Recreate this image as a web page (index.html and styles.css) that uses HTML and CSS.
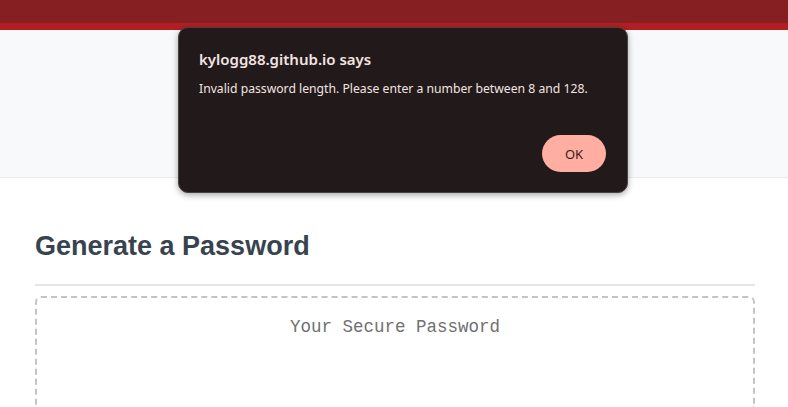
FILE: index.html
```html
<!DOCTYPE html>
<html lang="en">
<head>
<meta charset="utf-8">
<title>Password Generator</title>
<link rel="stylesheet" href="styles.css">
</head>
<body>
<header class="topbar"></header>
<section class="hero"></section>
<main class="wrapper">
  <div class="card">
    <h2 class="card-title">Generate a Password</h2>
    <div class="card-body">
      <textarea class="password" readonly placeholder="Your Secure Password"></textarea>
    </div>
  </div>
</main>
<div class="dialog" role="dialog">
  <div class="dialog-title">kylogg88.github.io says</div>
  <div class="dialog-msg">Invalid password length. Please enter a number between 8 and 128.</div>
  <div class="dialog-actions"><button class="ok-btn">OK</button></div>
</div>
</body>
</html>
```
FILE: styles.css
```css
* { box-sizing: border-box; }
html, body { margin: 0; padding: 0; }
html { overflow: hidden; }
body {
  background: #ffffff;
  font-family: "Liberation Sans", Arial, sans-serif;
  overflow: hidden;
  height: 407px;
}
.topbar {
  height: 30px;
  background: #861f21;
  border-bottom: 7px solid #b21f23;
}
.hero {
  height: 148px;
  background: #f8f9fb;
  border-bottom: 1px solid #e9ebee;
}
.wrapper {
  padding: 0 33px 0 35px;
}
.card-title {
  margin: 53px 0 0;
  font-size: 27px;
  font-weight: bold;
  color: #37434f;
  line-height: 30px;
  padding-bottom: 23px;
  border-bottom: 2px solid #e5e5e5;
}
.card-body {
  padding-top: 10px;
}
.password {
  display: block;
  width: 100%;
  height: 112px;
  border: 2px dashed #c4c4c4;
  border-bottom: none;
  border-radius: 6px 6px 0 0;
  resize: none;
  padding: 19px 20px 0;
  font-family: "Liberation Mono", "DejaVu Sans Mono", monospace;
  font-size: 17.5px;
  text-align: center;
  color: #707070;
  background: #fff;
  outline: none;
}
.password::placeholder { color: #707070; opacity: 1; }
.dialog {
  position: absolute;
  left: 178px;
  top: 27px;
  width: 450px;
  height: 166px;
  background: #221a1a;
  border: 1px solid #4a4242;
  border-radius: 10px;
  box-shadow: 0 2px 6px rgba(0,0,0,0.35);
  padding: 22px 20px 20px 20px;
  font-family: "Noto Sans", "Open Sans", sans-serif;
  color: #f2e4e2;
  display: flex;
  flex-direction: column;
}
.dialog-title {
  font-size: 15px;
  font-weight: 600;
  line-height: 18px;
}
.dialog-msg {
  font-size: 12.2px;
  line-height: 18px;
  margin-top: 12px;
}
.dialog-actions {
  margin-top: auto;
  display: flex;
  justify-content: flex-end;
}
.ok-btn {
  width: 64px;
  height: 37px;
  border: none;
  border-radius: 19px;
  background: #ffaea1;
  color: #3a1a18;
  font-family: "Noto Sans", "Open Sans", sans-serif;
  font-size: 13px;
  margin-right: 1px;
}
```
